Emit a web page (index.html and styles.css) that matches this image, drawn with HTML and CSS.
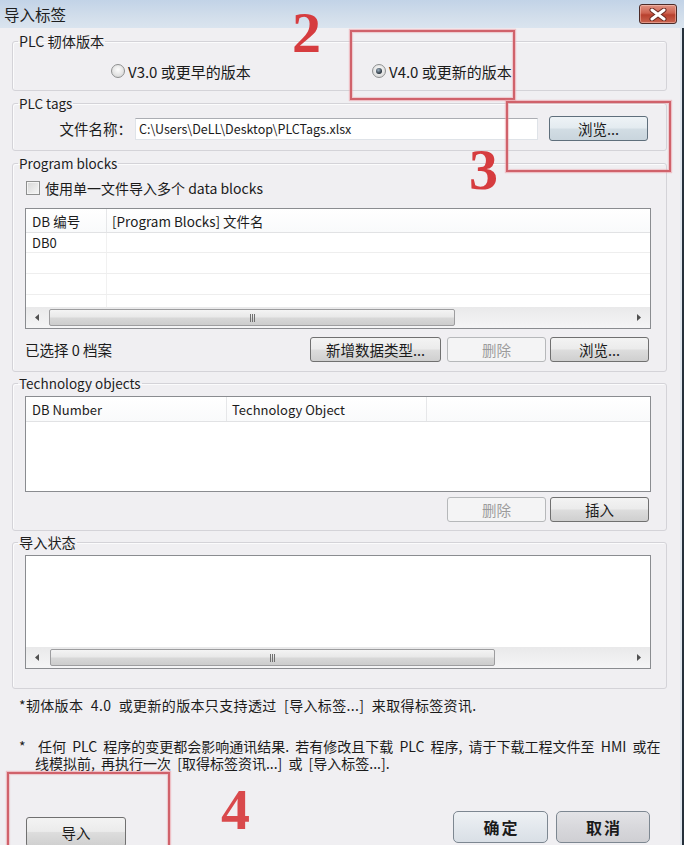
FILE: index.html
```html
<!DOCTYPE html>
<html lang="zh-CN">
<head>
<meta charset="utf-8">
<title>导入标签</title>
<link rel="stylesheet" href="styles.css">
</head>
<body>
<div class="window">
  <div class="titlebar">
    <span class="title">导入标签</span>
    <span class="close">
      <svg width="18" height="13" viewBox="0 0 18 13"><path d="M3 2L15 11M15 2L3 11" stroke="#6a2a22" stroke-width="5" stroke-linecap="round"/><path d="M3 2L15 11M15 2L3 11" stroke="#ffffff" stroke-width="3" stroke-linecap="round"/></svg>
    </span>
  </div>
  <div class="frame">
    <div class="content">
      <fieldset class="group">
        <legend class="zh">PLC 韧体版本</legend>
        <div class="gbody radios">
          <label class="radio first"><span class="rb"></span>V3.0 或更早的版本</label>
          <label class="radio"><span class="rb on"></span>V4.0 或更新的版本</label>
        </div>
      </fieldset>

      <fieldset class="group gap5">
        <legend>PLC tags</legend>
        <div class="gbody filerow">
          <span class="flabel">文件名称：</span>
          <span class="input">C:\Users\DeLL\Desktop\PLCTags.xlsx</span>
          <span class="btn blue w99 ml11">浏览...</span>
        </div>
      </fieldset>

      <fieldset class="group gap5">
        <legend>Program blocks</legend>
        <div class="gbody inset pb">
          <label class="check"><span class="cb"></span>使用单一文件导入多个 data blocks</label>
          <div class="table t1">
            <div class="thead">
              <span class="c1">DB 编号</span>
              <span class="c2">[Program Blocks] 文件名</span>
            </div>
            <div class="rows">
              <div class="row h20"><span class="c1">DB0</span><span class="c2"></span></div>
              <div class="row"><span class="c1"></span><span class="c2"></span></div>
              <div class="row"><span class="c1"></span><span class="c2"></span></div>
              <div class="row"><span class="c1"></span><span class="c2"></span></div>
            </div>
            <div class="hscroll">
              <span class="arr"><svg width="4" height="7" viewBox="0 0 4 7"><path d="M4 0L0 3.5L4 7Z" fill="#505050"/></svg></span>
              <span class="thumb th1"><svg width="7" height="8" viewBox="0 0 7 8"><path d="M1.5 0V8M3.5 0V8M5.5 0V8" stroke="#707070" shape-rendering="crispEdges"/></svg></span>
              <span class="track"></span>
              <span class="arr"><svg width="4" height="7" viewBox="0 0 4 7"><path d="M0 0L4 3.5L0 7Z" fill="#505050"/></svg></span>
            </div>
          </div>
          <div class="btnrow">
            <span class="count">已选择 0 档案</span>
            <span class="btn w131 ml-auto">新增数据类型...</span>
            <span class="btn dis w99 ml6">删除</span>
            <span class="btn w99 ml4">浏览...</span>
          </div>
        </div>
      </fieldset>

      <fieldset class="group gap4">
        <legend>Technology objects</legend>
        <div class="gbody inset to">
          <div class="table t2">
            <div class="thead">
              <span class="d1">DB Number</span>
              <span class="d2">Technology Object</span>
              <span class="d3"></span>
            </div>
          </div>
          <div class="btnrow end">
            <span class="btn dis w99">删除</span>
            <span class="btn w99 ml4">插入</span>
          </div>
        </div>
      </fieldset>

      <fieldset class="group gap4">
        <legend class="zh">导入状态</legend>
        <div class="gbody inset st">
          <div class="table t3">
            <div class="hscroll">
              <span class="arr"><svg width="4" height="7" viewBox="0 0 4 7"><path d="M4 0L0 3.5L4 7Z" fill="#505050"/></svg></span>
              <span class="thumb th2"><svg width="7" height="8" viewBox="0 0 7 8"><path d="M1.5 0V8M3.5 0V8M5.5 0V8" stroke="#707070" shape-rendering="crispEdges"/></svg></span>
              <span class="track"></span>
              <span class="arr"><svg width="4" height="7" viewBox="0 0 4 7"><path d="M0 0L4 3.5L0 7Z" fill="#505050"/></svg></span>
            </div>
          </div>
        </div>
      </fieldset>

      <p class="note1">*韧体版本 4.0 或更新的版本只支持透过 [导入标签...] 来取得标签资讯.</p>
      <div class="note2">
        <span class="star">*</span>
        <p>任何 PLC 程序的变更都会影响通讯结果. 若有修改且下载 PLC 程序, 请于下载工程文件至 HMI 或在线模拟前, 再执行一次 [取得标签资讯...] 或 [导入标签...].</p>
      </div>

      <div class="bottom">
        <span class="btn imp">导入</span>
        <span class="btn big ok ml-auto">确定</span>
        <span class="btn big cancel ml8">取消</span>
      </div>
    </div>
    <div class="edge"></div>
  </div>

  <div class="mark mark-a"></div>
  <div class="mark mark-b"></div>
  <div class="mark mark-c"></div>
  <span class="num n2">2</span>
  <span class="num n3">3</span>
  <span class="num n4">4</span>
</div>
</body>
</html>
```

FILE: styles.css
```css
* { box-sizing: border-box; }
html, body { margin: 0; padding: 0; }
body {
  width: 684px;
  height: 845px;
  overflow: hidden;
  font-family: "Noto Sans CJK SC", "Noto Sans", sans-serif;
  font-size: 13.5px;
  color: #1b1b1b;
  background: #f0eff2;
}
.window { position: relative; width: 684px; height: 845px; overflow: hidden; }

.titlebar {
  height: 28px;
  display: flex;
  align-items: flex-start;
  padding: 0 7px 0 4px;
  background: linear-gradient(#c2d3e7, #d2deeb 60%, #dae4ef);
}
.title { font-size: 15.5px; line-height: 29px; color: #1e1e1e; }
.close {
  margin-left: auto;
  margin-top: 4px;
  width: 38px;
  height: 20px;
  border: 1px solid #4c2b28;
  border-radius: 3px;
  background: linear-gradient(#e09383, #cd6250 45%, #b8402e 55%, #c9644f);
  box-shadow: inset 0 0 0 1px rgba(255, 215, 205, 0.45);
  display: flex;
  align-items: center;
  justify-content: center;
}

.frame { display: flex; height: 817px; }
.content { width: 680px; background: #f0eff2; padding-top: 6px; }
.edge { width: 4px; background: linear-gradient(to right, #dfe6ee 0, #dfe6ee 2px, #25303b 2px); }

.group {
  margin: 0 13px 0 12px;
  padding: 0;
  border: 1px solid #d4d3d8;
  border-radius: 3px;
  min-width: 0;
  box-shadow: inset 1px 1px 0 #fbfbfc;
}
.group legend {
  margin-left: 5px;
  padding: 0 1px;
  font-size: 13.5px;
  line-height: 14px;
  color: #1e1e1e;
}
.group legend.zh { font-size: 14.2px; }
.gap5 { margin-top: 5px; }
.gap4 { margin-top: 4px; }

.radios { display: flex; padding: 13px 0 9px 98px; }
.radio { display: flex; align-items: center; height: 20px; font-size: 15px; }
.radio.first { width: 261px; }
.rb {
  position: relative;
  width: 14px;
  height: 14px;
  margin-right: 3px;
  border-radius: 50%;
  border: 1px solid #8e9090;
  background: radial-gradient(circle at 50% 40%, #fdfdfd, #d0d0d0);
  flex: none;
}
.rb.on::after {
  content: "";
  position: absolute;
  left: 3px;
  top: 3px;
  width: 6px;
  height: 6px;
  border-radius: 50%;
  background: radial-gradient(circle at 40% 35%, #9fb2c2, #1d2731 75%);
}

.filerow { display: flex; align-items: center; padding: 6px 0 9px 0; }
.filerow > * { flex: none; }
.flabel { width: 119px; text-align: right; font-size: 14.5px; }
.input {
  margin-left: 3px;
  width: 403px;
  height: 22px;
  line-height: 20px;
  padding-left: 3px;
  background: #fff;
  border: 1px solid #dfe3e8;
  border-top-color: #abadb3;
  font-size: 12.5px;
}

.btn {
  display: flex;
  align-items: center;
  justify-content: center;
  height: 25px;
  border: 1px solid #707070;
  border-radius: 3px;
  background: linear-gradient(#f3f3f3, #ebebeb 48%, #dddddd 52%, #cfcfcf);
  font-size: 14.5px;
  color: #1b1b1b;
  flex: none;
}
.btn.blue {
  border-color: #5f6f7c;
  background: linear-gradient(#eef3f6, #e3ebf0 48%, #d2dde4 52%, #c9d5dd);
}
.btn.dis {
  border-color: #b6b8ba;
  background: #f4f4f5;
  color: #9c9c9c;
}
.w99 { width: 99px; }
.w131 { width: 131px; }
.ml11 { margin-left: 11px; }
.ml6 { margin-left: 6px; }
.ml4 { margin-left: 4px; }
.ml8 { margin-left: 8px; }
.ml-auto { margin-left: auto; }

.inset { padding-left: 12px; padding-right: 15px; }
.pb { padding-top: 10px; padding-bottom: 9px; }
.to { padding-top: 6px; padding-bottom: 8px; }
.st { padding-top: 6px; padding-bottom: 19px; }

.check { display: flex; align-items: center; height: 16px; font-size: 14px; }
.cb {
  width: 14px;
  height: 14px;
  margin-left: 1px;
  margin-right: 5px;
  border: 1px solid #8e8f8f;
  background: linear-gradient(135deg, #d6d6d6, #f7f7f7);
  box-shadow: inset 0 0 0 1px #f4f4f4;
  flex: none;
}

.table {
  background: #fff;
  border: 1px solid #8a8c90;
  display: flex;
  flex-direction: column;
  font-size: 13px;
}
.t1 { margin-top: 12px; height: 121px; }
.t2 { height: 96px; }
.t3 { height: 114px; justify-content: flex-end; }

.thead {
  display: flex;
  height: 24px;
  border-bottom: 1px solid #e1e2e4;
  background: linear-gradient(#ffffff, #f9fafb);
  flex: none;
}
.thead span { display: flex; align-items: center; height: 100%; }
.t1 .thead { font-size: 13.5px; }
.c1 { width: 81px; padding-left: 6px; border-right: 1px solid #e6e7e9; flex: none; }
.c2 { flex: 1; padding-left: 5px; }
.rows { flex: 1; overflow: hidden; }
.row { display: flex; height: 21px; border-bottom: 1px solid #eeeeee; }
.row.h20 { height: 20px; }
.row span { display: flex; align-items: center; }
.row .c1 { border-right-color: #f1f1f1; }

.t2 .thead { height: 25px; }
.d1 { width: 201px; padding-left: 6px; border-right: 1px solid #e6e7e9; flex: none; }
.d2 { width: 200px; padding-left: 5px; border-right: 1px solid #e6e7e9; flex: none; }
.d3 { flex: 1; }

.hscroll {
  height: 21px;
  flex: none;
  display: flex;
  align-items: center;
  background: linear-gradient(#e9e9ea, #f5f5f6);
}
.arr { width: 22px; height: 100%; display: flex; align-items: center; justify-content: center; flex: none; }
.thumb {
  height: 17px;
  border: 1px solid #9d9d9f;
  border-radius: 2px;
  background: linear-gradient(#f4f4f4, #e8e8e8 48%, #d8d8d8 52%, #cdcdcd);
  display: flex;
  align-items: center;
  justify-content: center;
  flex: none;
}
.th1 { width: 406px; margin-left: 1px; }
.th2 { width: 445px; margin-left: 2px; }
.track { flex: 1; }

.btnrow { display: flex; align-items: center; margin-top: 8px; padding-right: 2px; }
.btnrow.end { justify-content: flex-end; margin-top: 5px; }
.count { font-size: 14.5px; }

.note1 {
  margin: 7px 0 0 19px;
  font-size: 14px;
  line-height: 18px;
  word-spacing: 4px;
  letter-spacing: 0.35px;
}
.note2 {
  display: flex;
  margin: 24px 8px 0 19px;
  font-size: 14px;
  line-height: 17px;
  word-spacing: 3px;
}
.note2 .star { width: 16px; flex: none; }
.note2 p { margin: 0; text-indent: 3px; }

.bottom { display: flex; align-items: flex-start; margin-top: 39px; padding: 0 30px 0 26px; }
.btn.imp { width: 100px; height: 30px; margin-top: 6px; }
.btn.big {
  height: 32px;
  border-radius: 5px;
  border-color: #7d8791;
  font-size: 16px;
  font-weight: bold;
  letter-spacing: 2px;
  padding-left: 2px;
}
.btn.ok { width: 95px; background: linear-gradient(#eef1f4, #e3e8ed 50%, #d9dfe6); }
.btn.cancel { width: 94px; background: linear-gradient(#e3e3e6, #d8d8dc 50%, #cfcfd3); }

.mark {
  position: absolute;
  border: 2px solid #d0626b;
  box-shadow: 0 0 1px 1px rgba(236, 160, 168, 0.6), inset 0 0 1px 1px rgba(236, 160, 168, 0.5);
}
.mark-a { left: 350px; top: 30px; width: 165px; height: 70px; }
.mark-b { left: 506px; top: 101px; width: 165px; height: 71px; }
.mark-c { left: 7px; top: 772px; width: 163px; height: 90px; }

.num {
  position: absolute;
  font-family: "Liberation Serif", serif;
  font-weight: bold;
  font-size: 58px;
  line-height: 58px;
  color: #d63c3f;
}
.n2 { left: 292px; top: 4px; }
.n3 { left: 469px; top: 141px; }
.n4 { left: 221px; top: 781px; color: #d9494c; }
```
